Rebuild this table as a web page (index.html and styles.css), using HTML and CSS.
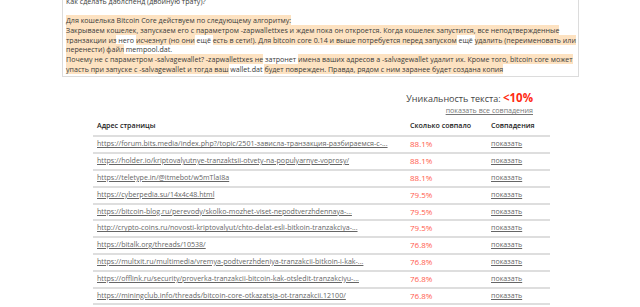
FILE: index.html
```html
<!DOCTYPE html>
<html lang="ru">
<head>
<meta charset="utf-8">
<link rel="stylesheet" href="styles.css">
</head>
<body>
<div class="textbox">
  <p class="line">Как сделать даблспенд (двойную трату)?</p>
  <p class="line blank">&nbsp;</p>
  <p class="line"><span class="hl">Для кошелька Bitcoin Core действуем по следующему алгоритму:</span><br><span class="hl">Закрываем кошелек, запускаем его с параметром -zapwallettxes и ждем пока он откроется. Когда кошелек запустится, все неподтвержденные транзакции из</span> него <span class="hl">исчезнут (но они</span> ещё <span class="hl">есть в сети!). Для bitcoin core 0.14 и выше потребуется перед запуском</span> ещё <span class="hl">удалить (переименовать или перенести) файл</span> mempool.dat.<br><span class="hl">Почему не с параметром -salvagewallet? -zapwallettxes не</span> затронет <span class="hl">имена ваших адресов а -salvagewallet удалит их. Кроме того, bitcoin core может упасть при запуске с -salvagewallet и тогда ваш</span> wallet.dat <span class="hl">будет поврежден. Правда, рядом с ним заранее будет создана копия</span></p>
</div>

<div class="results">
  <div class="uniq">
    <div class="uniq-title">Уникальность текста: <span class="uniq-value">&lt;10%</span></div>
    <a class="all-link" href="#">показать все совпадения</a>
  </div>
  <table class="matches">
    <thead>
      <tr><th class="c-url">Адрес страницы</th><th class="c-pct">Сколько совпало</th><th class="c-show">Совпадения</th></tr>
    </thead>
    <tbody>
      <tr><td class="c-url"><a href="#">https://forum.bits.media/index.php?/topic/2501-зависла-транзакция-разбираемся-с-...</a></td><td class="c-pct">88.1%</td><td class="c-show"><a href="#">показать</a></td></tr>
      <tr><td class="c-url"><a href="#">https://holder.io/kriptovalyutnye-tranzaktsii-otvety-na-populyarnye-voprosy/</a></td><td class="c-pct">88.1%</td><td class="c-show"><a href="#">показать</a></td></tr>
      <tr><td class="c-url"><a href="#">https://teletype.in/@itmebot/w5mTlaI8a</a></td><td class="c-pct">88.1%</td><td class="c-show"><a href="#">показать</a></td></tr>
      <tr><td class="c-url"><a href="#">https://cyberpedia.su/14x4c48.html</a></td><td class="c-pct">79.5%</td><td class="c-show"><a href="#">показать</a></td></tr>
      <tr><td class="c-url"><a href="#">https://bitcoin-blog.ru/perevody/skolko-mozhet-viset-nepodtverzhdennaya-...</a></td><td class="c-pct">79.5%</td><td class="c-show"><a href="#">показать</a></td></tr>
      <tr><td class="c-url"><a href="#">http://crypto-coins.ru/novosti-kriptovalyut/chto-delat-esli-bitkoin-tranzakciya-...</a></td><td class="c-pct">79.5%</td><td class="c-show"><a href="#">показать</a></td></tr>
      <tr><td class="c-url"><a href="#">https://bitalk.org/threads/10538/</a></td><td class="c-pct">76.8%</td><td class="c-show"><a href="#">показать</a></td></tr>
      <tr><td class="c-url"><a href="#">https://multxit.ru/multimedia/vremya-podtverzhdeniya-tranzakcii-bitkoin-i-kak-...</a></td><td class="c-pct">76.8%</td><td class="c-show"><a href="#">показать</a></td></tr>
      <tr><td class="c-url"><a href="#">https://offlink.ru/security/proverka-tranzakcii-bitcoin-kak-otsledit-tranzakciyu-...</a></td><td class="c-pct">76.8%</td><td class="c-show"><a href="#">показать</a></td></tr>
      <tr><td class="c-url"><a href="#">https://miningclub.info/threads/bitcoin-core-otkazatsja-ot-tranzakcii.12100/</a></td><td class="c-pct">76.8%</td><td class="c-show"><a href="#">показать</a></td></tr>
    </tbody>
  </table>
</div>
</body>
</html>
```

FILE: styles.css
```css
html, body {
  margin: 0;
  padding: 0;
  background: #ffffff;
  font-family: "Open Sans", "Noto Sans", sans-serif;
  color: #333333;
}

.textbox {
  margin: -6px 0 0 62px;
  width: 510px;
  padding: 2.5px 2px 1px 3px;
  border: 1px solid #dcdcdc;
  border-top: none;
  font-size: 7.1px;
  line-height: 9.8px;
  color: #3a3a3a;
}

.line {
  margin: 0;
}

.hl {
  background: #fde2c1;
}

.results {
  width: 457px;
  margin: 14px 0 0 93px;
}

.uniq {
  display: flex;
  flex-direction: column;
  align-items: flex-end;
  padding-right: 17px;
}

.uniq-title {
  font-size: 9px;
  line-height: 13px;
  color: #444444;
}

.uniq-value {
  color: #ff2a12;
  font-size: 11.5px;
  font-weight: 700;
}

.all-link {
  font-size: 7.1px;
  line-height: 10px;
  color: #777777;
  text-decoration: underline;
}

.matches {
  width: 457px;
  margin-top: 1.5px;
  border-collapse: collapse;
  font-size: 7.1px;
  table-layout: fixed;
}

.matches th {
  text-align: left;
  font-weight: 600;
  color: #222222;
  padding: 4px 4px 5px 4px;
  line-height: 10px;
  border-bottom: 2px solid #dedede;
  white-space: nowrap;
}

.matches td {
  padding: 2px 4px 3px 4px;
  line-height: 9.8px;
  border-bottom: 2px solid #dedede;
  white-space: nowrap;
  overflow: hidden;
}

.matches a {
  color: #666666;
  text-decoration: underline;
}

.c-url { width: 305px; }
.c-pct { width: 73px; }
.c-show { width: 55px; }

td.c-pct {
  color: #ff5a4c;
  font-size: 8px;
}
```
